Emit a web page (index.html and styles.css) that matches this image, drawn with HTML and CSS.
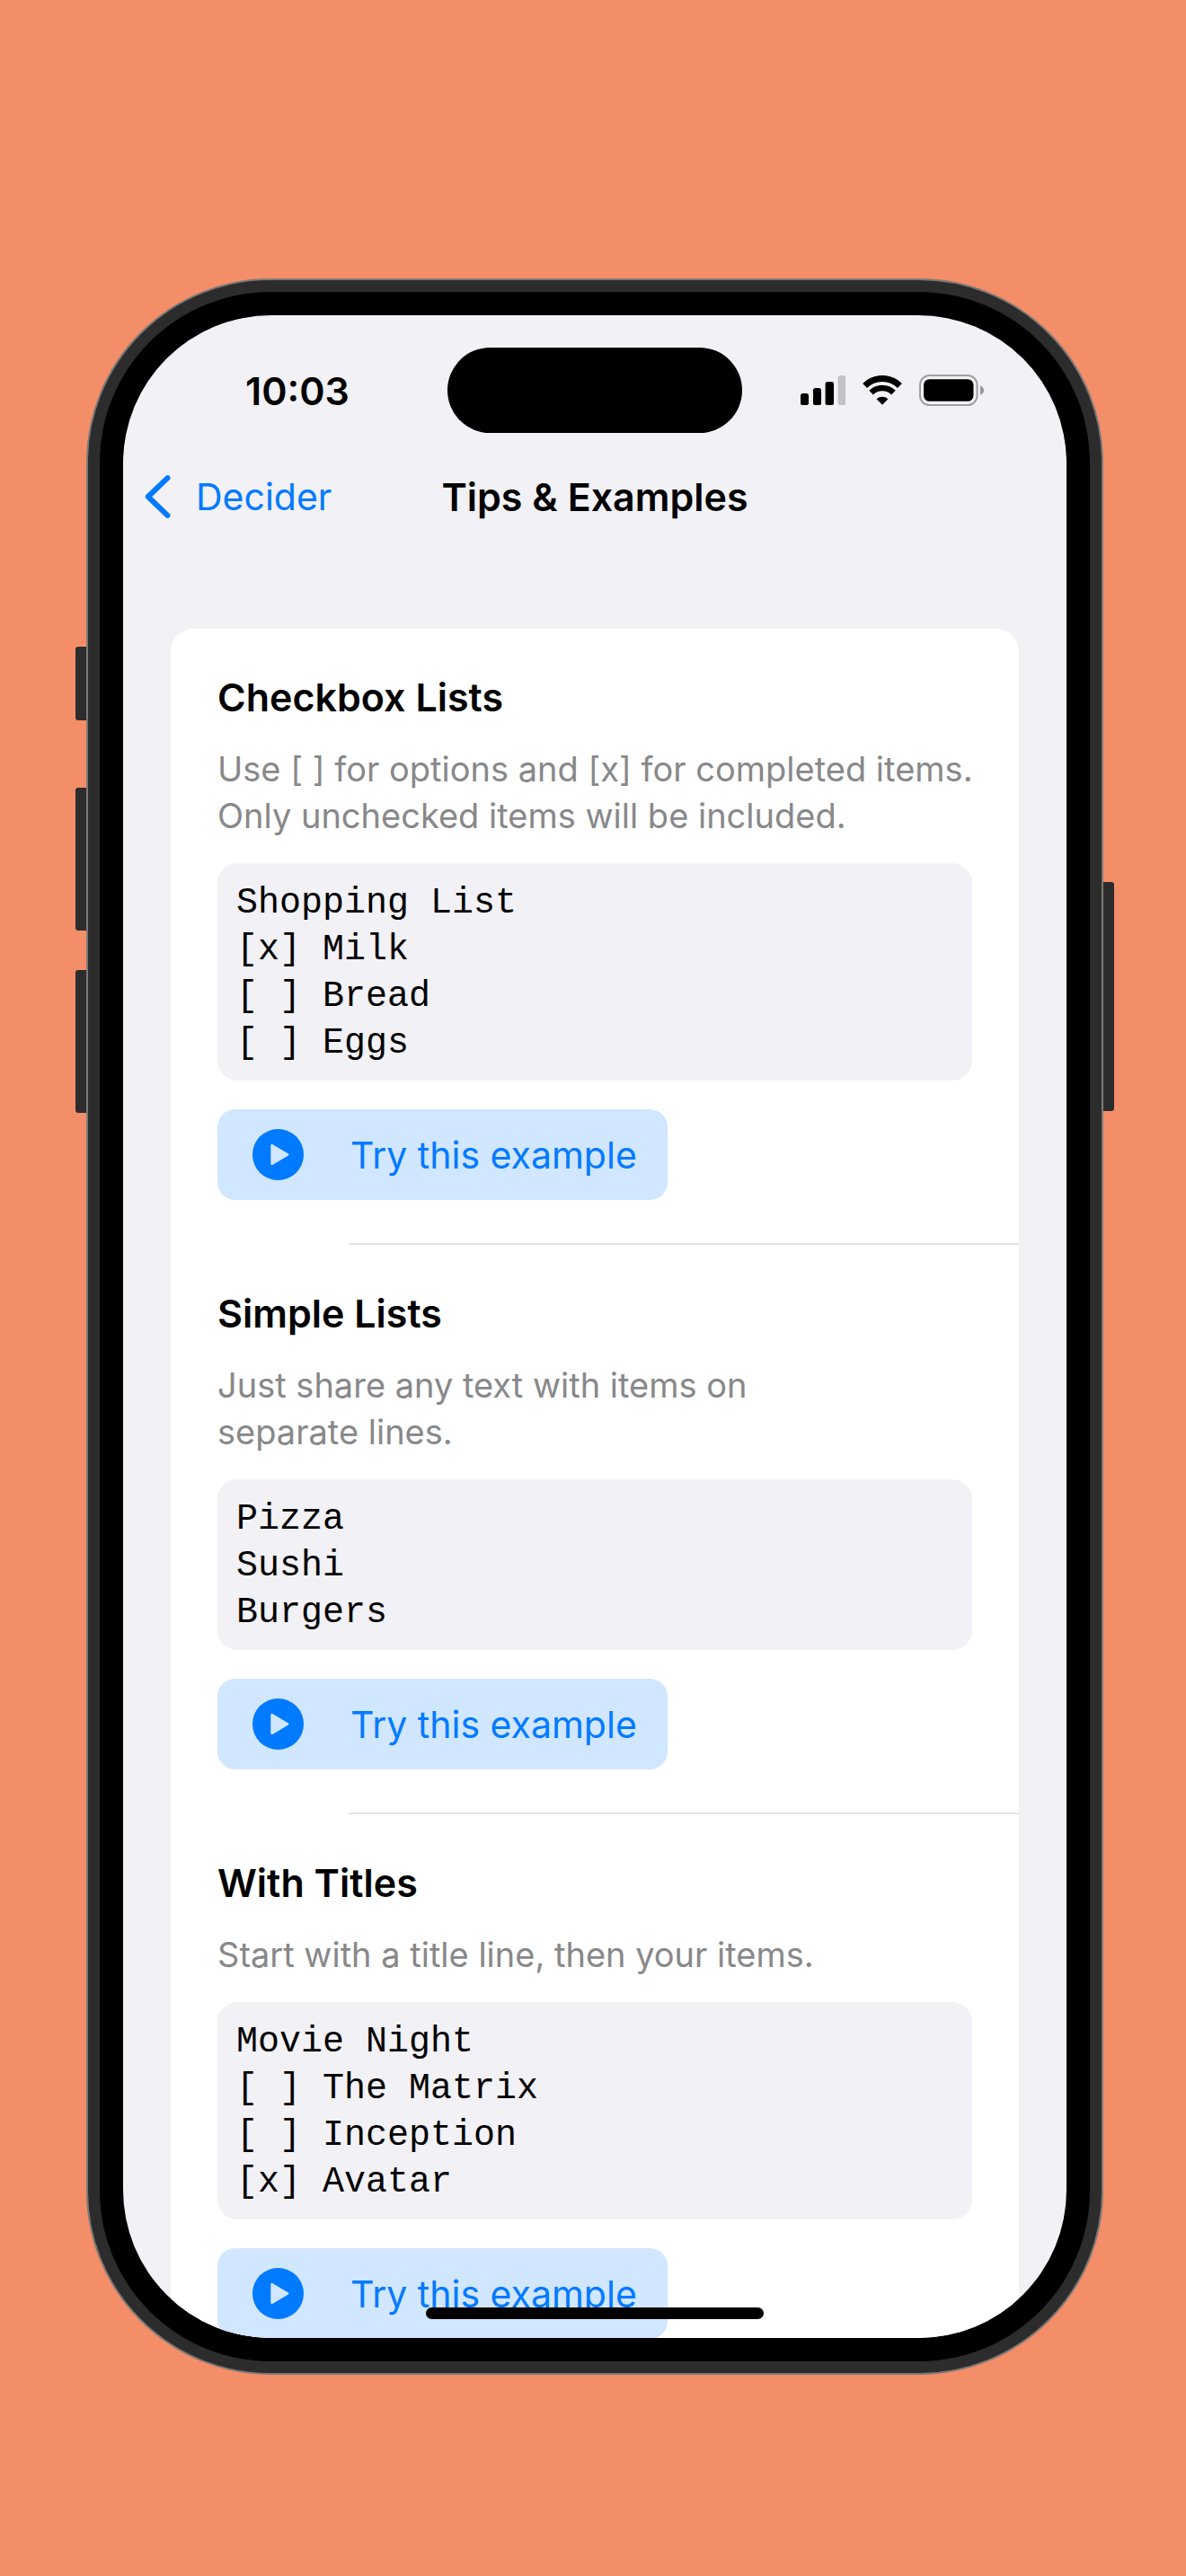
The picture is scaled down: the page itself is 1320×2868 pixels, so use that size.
FILE: index.html
```html
<!DOCTYPE html>
<html lang="en">
<head>
<meta charset="utf-8">
<meta name="viewport" content="width=device-width, initial-scale=1">
<title>Tips &amp; Examples</title>
<link rel="stylesheet" href="styles.css">
</head>
<body>
<svg class="sprite" aria-hidden="true">
  <symbol id="play" viewBox="0 0 57 57">
    <circle cx="28.5" cy="28.5" r="28.5" fill="#007aff"/>
    <path d="M21.6 18.2v20.6L39.2 28.5z" fill="#d1e6ff" stroke="#d1e6ff" stroke-width="2.6" stroke-linejoin="round"/>
  </symbol>
</svg>
<div class="phone">
  <span class="side-key action"></span>
  <span class="side-key volume-up"></span>
  <span class="side-key volume-down"></span>
  <span class="side-key power"></span>
  <div class="bezel">
    <div class="screen">
      <div class="status">
        <span class="time">10:03</span>
        <span class="island"></span>
        <div class="indicators">
          <svg width="50" height="33" viewBox="0 0 50 33" role="img" aria-label="Signal">
            <rect x="0" y="20" width="9" height="13" rx="2.6"/>
            <rect x="14" y="14" width="9" height="19" rx="2.6"/>
            <rect x="27.6" y="7" width="9.4" height="26" rx="2.6"/>
            <rect x="41.6" y="0" width="8.6" height="33" rx="2.6" fill="#c2c2c6"/>
          </svg>
          <svg width="44" height="33" viewBox="0 0 44 33" role="img" aria-label="Wi-Fi">
            <path d="M2.600 11.400a27.500 27.500 0 0 1 38.800 0" fill="none" stroke="#000" stroke-width="7"/>
            <path d="M9.600 19.200a17.500 17.500 0 0 1 24.800 0" fill="none" stroke="#000" stroke-width="6.600"/>
            <path d="M15.600 26.200a9.500 9.500 0 0 1 12.800 0L22 32.800z"/>
          </svg>
          <svg width="72" height="35" viewBox="0 0 72 35" role="img" aria-label="Battery">
            <rect x="1" y="1" width="63.5" height="33" rx="10.5" fill="none" stroke="#a0a0a4" stroke-width="2"/>
            <rect x="5" y="5.2" width="55.5" height="24.600" rx="6.5"/>
            <path d="M68 12.200c2.600 1 4 3 4 5.300s-1.400 4.300-4 5.300z" fill="#98989c"/>
          </svg>
        </div>
      </div>
      <header class="nav">
        <a class="back" href="#">
          <svg width="29" height="48" viewBox="0 0 29 48" aria-hidden="true"><path d="M25.500 3.200L3.800 24l21.700 20.800" fill="none" stroke="#007aff" stroke-width="6" stroke-linecap="round" stroke-linejoin="round"/></svg>
          Decider
        </a>
        <h1>Tips &amp; Examples</h1>
      </header>
      <main class="card">
        <section class="tip">
          <h2>Checkbox Lists</h2>
          <p>Use [ ] for options and [x] for completed items. Only unchecked items will be included.</p>
          <pre>Shopping List
[x] Milk
[ ] Bread
[ ] Eggs</pre>
          <button type="button"><svg class="play" aria-hidden="true"><use href="#play"/></svg>Try this example</button>
        </section>
        <section class="tip">
          <h2>Simple Lists</h2>
          <p>Just share any text with items on<br>separate lines.</p>
          <pre>Pizza
Sushi
Burgers</pre>
          <button type="button"><svg class="play" aria-hidden="true"><use href="#play"/></svg>Try this example</button>
        </section>
        <section class="tip">
          <h2>With Titles</h2>
          <p>Start with a title line, then your items.</p>
          <pre>Movie Night
[ ] The Matrix
[ ] Inception
[x] Avatar</pre>
          <button type="button"><svg class="play" aria-hidden="true"><use href="#play"/></svg>Try this example</button>
        </section>
      </main>
      <span class="home-bar"></span>
    </div>
  </div>
</div>
</body>
</html>
```
FILE: styles.css
```css
* { box-sizing: border-box; }

body {
  margin: 0;
  height: 100vh;
  padding: 310px 92px 224px 96px;
  display: flex;
  background: #f48e68;
  color: #000;
  font-family: Inter, "Liberation Sans", sans-serif;
  font-size: 41px;
  line-height: 54px;
}

.sprite { position: absolute; width: 0; height: 0; }

/* Device */
.phone {
  position: relative;
  flex: 1;
  min-width: 0;
  display: flex;
  padding: 13px;
  border: 2px solid #7c7876;
  border-radius: 205px;
  background: #2c2c2c;
}

.side-key {
  position: absolute;
  width: 12px;
  height: 159px;
  left: -14px;
  background: #2c2c2c;
  border-radius: 3px 0 0 3px;
}
.action { top: 408px; height: 82px; }
.volume-up { top: 565px; }
.volume-down { top: 768px; }
.power {
  top: 670px;
  left: auto;
  right: -14px;
  height: 255px;
  border-radius: 0 3px 3px 0;
}

.bezel {
  flex: 1;
  min-width: 0;
  display: flex;
  padding: 26px;
  border-radius: 190px;
  background: #000;
}

.screen {
  position: relative;
  flex: 1;
  min-width: 0;
  display: flex;
  flex-direction: column;
  overflow: hidden;
  border-radius: 165px;
  background: #f2f1f6;
}

/* Status bar */
.status {
  flex: none;
  display: grid;
  grid-template-columns: 1fr 328px 1fr;
  align-items: center;
  padding-top: 36px;
}
.time {
  padding-left: 136px;
  font-size: 43px;
  font-weight: 600;
}
.island { height: 95px; border-radius: 48px; background: #000; }
.indicators {
  display: flex;
  justify-content: flex-end;
  align-items: center;
  gap: 19px;
  padding-right: 92px;
}

/* Navigation bar */
.nav {
  flex: none;
  display: grid;
  grid-template-columns: 1fr auto 1fr;
  align-items: center;
  height: 108px;
  margin: 17px 24px 93px;
}
.back {
  display: flex;
  align-items: center;
  gap: 28px;
  color: #007aff;
  text-decoration: none;
}
h1, h2 { margin: 0; font-size: 43px; font-weight: 600; }

/* Tips */
.card {
  flex: none;
  margin: 0 53px;
  border-radius: 25px;
  background: #fff;
}
.tip {
  display: flex;
  flex-direction: column;
  align-items: flex-start;
  padding: 49px 52px 48px;
}
.tip + .tip {
  border-top: 2px solid;
  border-image: linear-gradient(to right, transparent 199px, #e4e4e6 199px) 1;
}
.tip p {
  margin: 27px -16px 27px 0;
  color: #88888a;
  font-size: 38px;
  line-height: 52px;
}
.tip pre {
  align-self: stretch;
  margin: 0 0 32px;
  padding: 19px 21px 15px;
  border-radius: 22px;
  background: #f2f1f6;
  font: 40px/52px "Liberation Mono", monospace;
}
.tip button {
  display: flex;
  align-items: center;
  gap: 52px;
  height: 101px;
  padding: 0 34px 0 39px;
  border: 0;
  border-radius: 20px;
  background: #d1e6ff;
  color: #007aff;
  font: inherit;
}
.play { flex: none; width: 57px; height: 57px; }

.home-bar {
  position: absolute;
  left: 50%;
  bottom: 21px;
  width: 376px;
  height: 13px;
  margin-left: -188px;
  border-radius: 7px;
  background: #000;
}
```
